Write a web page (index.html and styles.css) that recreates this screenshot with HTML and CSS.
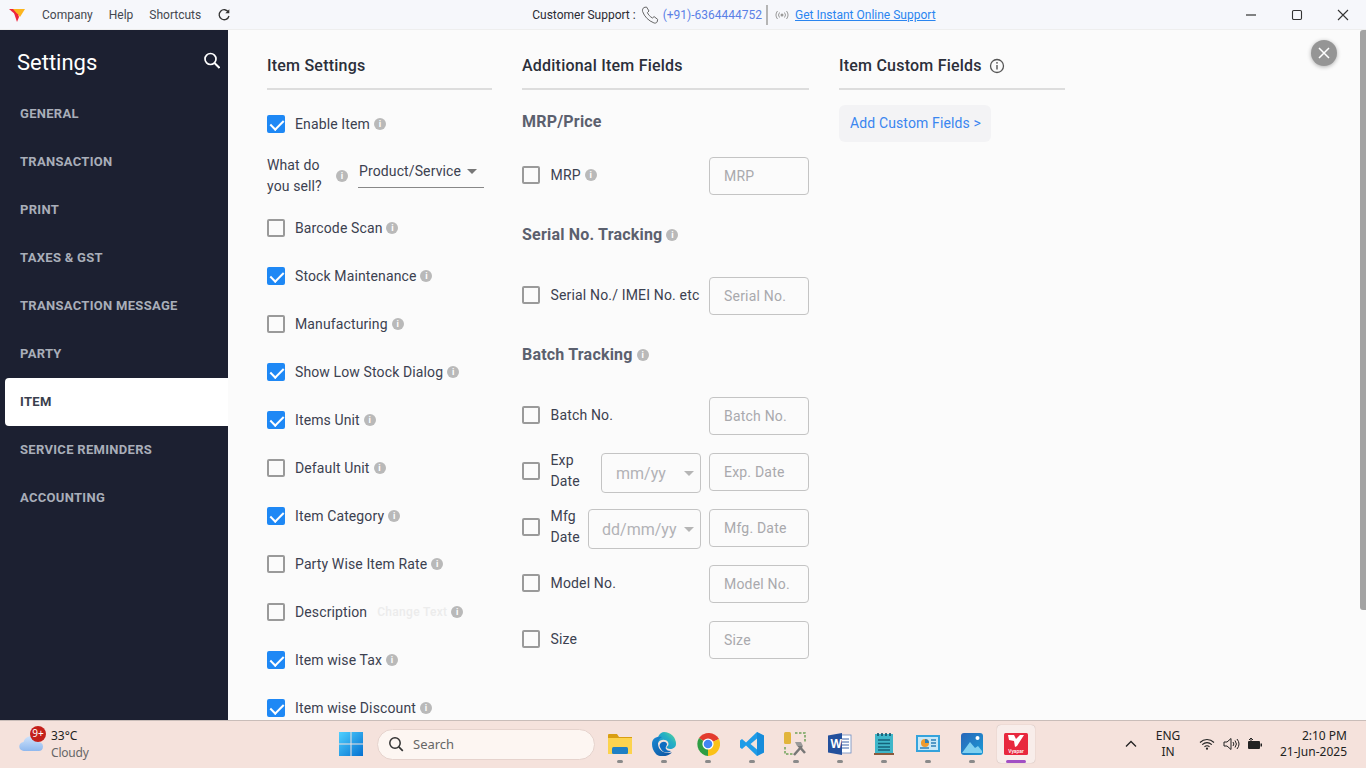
FILE: index.html
```html
<!DOCTYPE html>
<html lang="en">
<head>
<meta charset="utf-8">
<title>Settings</title>
<link rel="stylesheet" href="styles.css">
</head>
<body>
<div class="app">
  <header class="titlebar">
    <svg class="logo" viewBox="0 0 16 14" width="16" height="14"><path d="M0 1h6l3 5-2 1z" fill="#f0243c"/><path d="M4 1h12l-5 8z" fill="#fcb51e"/><path d="M5 5l4 1 1 3-2 5z" fill="#f0243c"/></svg>
    <nav class="menu"><span>Company</span><span>Help</span><span>Shortcuts</span>
      <svg class="refresh" viewBox="0 0 14 14" width="14" height="14"><path d="M11.5 4.2A5 5 0 1 0 12 8" fill="none" stroke="#333" stroke-width="1.3"/><path d="M12.3 1.2v4h-4z" fill="#333"/></svg>
    </nav>
    <div class="support">
      <span class="support-label">Customer Support :</span>
      <svg class="phone" viewBox="0 0 18 18" width="18" height="18"><path d="M3 1.5l2.5-.5 2.5 4-1.6 1.6c.8 2 2.6 4 5 5.4l1.7-1.4 3.6 2.8-.6 2.6c-.6 1-2 1.4-3.2.9C7.500 14.800 3.400 10.600 1.600 5.500 1.200 3.800 1.800 2.200 3 1.500z" fill="none" stroke="#666" stroke-width="1"/></svg>
      <span class="support-phone">(+91)-6364444752</span>
      <span class="support-sep"></span>
      <svg class="signal" viewBox="0 0 14 10" width="14" height="10"><circle cx="7" cy="5" r="1.500" fill="#999"/><path d="M4.500 2.500a4 4 0 0 0 0 5M9.500 2.500a4 4 0 0 1 0 5M2.500 1a6.500 6.500 0 0 0 0 8M11.500 1a6.500 6.500 0 0 1 0 8" fill="none" stroke="#999" stroke-width="1"/></svg>
      <a class="support-link">Get Instant Online Support</a>
    </div>
    <div class="winctl">
      <span class="winbtn"><svg viewBox="0 0 12 12" width="12" height="12"><path d="M1 6h10" stroke="#333" stroke-width="1.200"/></svg></span>
      <span class="winbtn"><svg viewBox="0 0 12 12" width="12" height="12"><rect x="1.500" y="1.500" width="9" height="9" rx="1.200" fill="none" stroke="#333" stroke-width="1.100"/></svg></span>
      <span class="winbtn"><svg viewBox="0 0 12 12" width="12" height="12"><path d="M1 1l10 10M11 1L1 11" stroke="#333" stroke-width="1.100"/></svg></span>
    </div>
  </header>

  <main class="main">
    <aside class="sidebar">
      <div class="side-head">
        <span class="side-title">Settings</span>
        <svg class="side-search" viewBox="0 0 18 18" width="18" height="18"><circle cx="8.500" cy="7" r="5.500" fill="none" stroke="#fff" stroke-width="1.700"/><path d="M12.500 11l5 5" stroke="#fff" stroke-width="2"/></svg>
      </div>
      <ul class="side-nav">
        <li>GENERAL</li><li>TRANSACTION</li><li>PRINT</li><li>TAXES &amp; GST</li><li>TRANSACTION MESSAGE</li><li>PARTY</li><li class="active">ITEM</li><li>SERVICE REMINDERS</li><li>ACCOUNTING</li>
      </ul>
    </aside>

    <section class="content">
      <div class="col col-a">
        <h2 class="col-title">Item Settings</h2>
        <div class="rows">
          <label class="row"><i class="cb on"></i><span>Enable Item</span><b class="info">i</b></label>
          <div class="sell">
            <span class="sell-label">What do you sell?</span><b class="info">i</b>
            <div class="sell-select"><span>Product/Service</span><i class="caret dark"></i></div>
          </div>
          <label class="row"><i class="cb"></i><span>Barcode Scan</span><b class="info">i</b></label>
          <label class="row"><i class="cb on"></i><span>Stock Maintenance</span><b class="info">i</b></label>
          <label class="row"><i class="cb"></i><span>Manufacturing</span><b class="info">i</b></label>
          <label class="row"><i class="cb on"></i><span>Show Low Stock Dialog</span><b class="info">i</b></label>
          <label class="row"><i class="cb on"></i><span>Items Unit</span><b class="info">i</b></label>
          <label class="row"><i class="cb"></i><span>Default Unit</span><b class="info">i</b></label>
          <label class="row"><i class="cb on"></i><span>Item Category</span><b class="info">i</b></label>
          <label class="row"><i class="cb"></i><span>Party Wise Item Rate</span><b class="info">i</b></label>
          <label class="row"><i class="cb"></i><span>Description</span><em class="change">Change Text</em><b class="info">i</b></label>
          <label class="row"><i class="cb on"></i><span>Item wise Tax</span><b class="info">i</b></label>
          <label class="row"><i class="cb on"></i><span>Item wise Discount</span><b class="info">i</b></label>
        </div>
      </div>

      <div class="col col-b">
        <h2 class="col-title">Additional Item Fields</h2>
        <h3 class="sub sub-first">MRP/Price</h3>
        <div class="frow"><i class="cb"></i><span class="flabel">MRP</span><b class="info">i</b><span class="field">MRP</span></div>
        <h3 class="sub">Serial No. Tracking<b class="info">i</b></h3>
        <div class="frow"><i class="cb"></i><span class="flabel">Serial No./ IMEI No. etc</span><span class="field">Serial No.</span></div>
        <h3 class="sub">Batch Tracking<b class="info">i</b></h3>
        <div class="stack">
          <div class="frow"><i class="cb"></i><span class="flabel">Batch No.</span><span class="field">Batch No.</span></div>
          <div class="frow"><i class="cb"></i><span class="flabel narrow">Exp Date</span><span class="pick pick-exp">mm/yy<i class="caret"></i></span><span class="field">Exp. Date</span></div>
          <div class="frow"><i class="cb"></i><span class="flabel narrow">Mfg Date</span><span class="pick pick-mfg">dd/mm/yy<i class="caret"></i></span><span class="field">Mfg. Date</span></div>
          <div class="frow"><i class="cb"></i><span class="flabel">Model No.</span><span class="field">Model No.</span></div>
          <div class="frow"><i class="cb"></i><span class="flabel">Size</span><span class="field">Size</span></div>
        </div>
      </div>

      <div class="col col-c">
        <h2 class="col-title">Item Custom Fields
          <svg viewBox="0 0 16 16" width="16" height="16"><circle cx="8" cy="8" r="6.500" fill="none" stroke="#555" stroke-width="1.300"/><path d="M8 7v4.500" stroke="#555" stroke-width="1.400"/><circle cx="8" cy="4.800" r=".9" fill="#555"/></svg>
        </h2>
        <a class="add-custom">Add Custom Fields &gt;</a>
      </div>

      <button class="close-fab" aria-label="Close"><svg viewBox="0 0 12 12" width="12" height="12"><path d="M1 1l10 10M11 1L1 11" stroke="#fff" stroke-width="1.500"/></svg></button>
      <div class="scrollthumb"></div>
    </section>
  </main>

  <footer class="taskbar">
    <div class="weather">
      <svg class="cloud" viewBox="0 0 26 18" width="26" height="18"><defs><linearGradient id="cl" x1="0" y1="0" x2="0" y2="1"><stop offset="0" stop-color="#cfe3fb"/><stop offset="1" stop-color="#8fb8ee"/></linearGradient></defs><path d="M5 17a4.500 4.500 0 0 1-.5-9C6 3 11 1 15 3c4 2 4 4 4 5 3 0 5 1.500 5 4.500 0 3-2 4.500-4 4.500z" fill="url(#cl)"/></svg>
      <span class="badge">9+</span>
      <div class="wtext"><span class="temp">33°C</span><span class="cond">Cloudy</span></div>
    </div>
    <div class="dock">
      <span class="tile">
        <svg viewBox="0 0 24 24" width="24" height="24"><defs><linearGradient id="wn" x1="0" y1="0" x2="1" y2="1"><stop offset="0" stop-color="#4fd0ff"/><stop offset="1" stop-color="#0570d0"/></linearGradient></defs><path d="M0 0h11.500v11.500H0zM12.500 0H24v11.500H12.500zM0 12.500h11.500V24H0zM12.500 12.500H24V24H12.500z" fill="url(#wn)"/></svg>
      </span>
      <div class="search">
        <svg viewBox="0 0 16 16" width="16" height="16"><circle cx="7" cy="7" r="5.200" fill="none" stroke="#333" stroke-width="1.500"/><path d="M10.800 10.800l4 4" stroke="#333" stroke-width="1.700"/></svg>
        <span>Search</span>
      </div>
      <span class="tile app-tile">
        <svg viewBox="0 0 24 24" width="24" height="24"><path d="M0 3a1 1 0 0 1 1-1h8l2 3h13v17H0z" fill="#d99e12"/><path d="M0 6h24v16H0z" fill="#fcd34e"/><rect x="4" y="15" width="16" height="7" rx="1.500" fill="#1f7fc4"/></svg>
      </span>
      <span class="tile app-tile">
        <svg viewBox="0 0 24 24" width="24" height="24"><defs><linearGradient id="ed" x1="0" y1="1" x2="1" y2="0"><stop offset="0" stop-color="#1a8ad4"/><stop offset=".6" stop-color="#25b0c4"/><stop offset="1" stop-color="#66de90"/></linearGradient><linearGradient id="ed2" x1="0" y1="0" x2="1" y2="1"><stop offset="0" stop-color="#1a8ad4"/><stop offset="1" stop-color="#0c4f9c"/></linearGradient></defs><path d="M12 0a12 12 0 0 1 12 12c0 3.500-3 5-6 5-2 0-3.500-1-3.500-2 2-1 2.500-3 1.500-5-2-3-8-3-10 1C4.500 5 8 0 12 0z" fill="url(#ed)"/><path d="M0 12C0 6 5 4 10 5 6 7 5 12 7 16c2 4 8 6 13 4.500-5 5-13 4.500-16 1.500C1 19 0 15 0 12z" fill="url(#ed2)"/><path d="M8 12c2-3 6-3 7 0 0 2-2 3-1 5 1 1 2 2 5 2-4 3-9 1-10-2-1-2-2-3-1-5z" fill="#0e6cc0"/></svg>
      </span>
      <span class="tile app-tile">
        <svg viewBox="0 0 24 24" width="24" height="24"><path d="M12 12L3 6a12 12 0 0 1 20 1z" fill="#e33b2e"/><path d="M12 12L23 7a12 12 0 0 1-11 17z" fill="#fbc116"/><path d="M12 12v12A12 12 0 0 1 3 6z" fill="#2f9e44"/><circle cx="12" cy="12" r="5.600" fill="#fff"/><circle cx="12" cy="12" r="4.300" fill="#4285f4"/></svg>
      </span>
      <span class="tile app-tile">
        <svg viewBox="0 0 24 24" width="24" height="24"><path d="M17 0l7 3.500v17L17 24 6 13.500 2 17l-2-1.500v-7L2 7l4 3.500z" fill="#1f9ce8"/><path d="M17 6.500L10.500 12l6.500 5.500z" fill="#f3e1da"/><path d="M17 0v24l7-3.500v-17z" fill="#0f7fcf" opacity=".55"/></svg>
      </span>
      <span class="tile app-tile">
        <svg viewBox="0 0 24 24" width="24" height="24"><rect x="0" y="0" width="7" height="12" rx="1.500" fill="#e2b53c"/><path d="M11 1h10v9M1 15v7h9" fill="none" stroke="#6fa35a" stroke-width="1.500" stroke-dasharray="2.500 1.500"/><path d="M10 23l8-9M14 13l7 8" stroke="#777" stroke-width="2.500"/><path d="M11 10h6l2 4h-6z" fill="#999"/></svg>
      </span>
      <span class="tile app-tile">
        <svg viewBox="0 0 24 24" width="24" height="24"><rect x="10" y="3" width="13" height="18" fill="#fff" stroke="#6d8cc0" stroke-width=".8"/><path d="M14 7h7M14 10h7M14 13h7M14 16h7" stroke="#3a63a8"/><path d="M0 3.500L14 1v22L0 20.500z" fill="#23509c"/><text x="2.500" y="16" class="word-w">W</text></svg>
      </span>
      <span class="tile app-tile">
        <svg viewBox="0 0 24 24" width="24" height="24"><rect x="3" y="2" width="18" height="20" fill="#3fb6c9"/><path d="M6 1v3M10 1v3M14 1v3M18 1v3" stroke="#14526a" stroke-width="1.600"/><path d="M6 8h12M6 11.500h12M6 15h12M6 18h12" stroke="#14627a" stroke-width="1.500"/><rect x="2" y="21" width="20" height="2" fill="#8a5a3c"/></svg>
      </span>
      <span class="tile app-tile">
        <svg viewBox="0 0 24 24" width="24" height="24"><rect x="0" y="3" width="24" height="17" fill="#35a3dc"/><rect x="2" y="5" width="20" height="13" fill="#c9e8f7"/><circle cx="9" cy="11" r="4" fill="#ef9a2d"/><path d="M9 11V7a4 4 0 0 1 4 4z" fill="#2d7fb8"/><path d="M15 8h5M15 11h5M15 14h5M4 16h9" stroke="#2d7fb8" stroke-width="1.300"/></svg>
      </span>
      <span class="tile app-tile">
        <svg viewBox="0 0 24 24" width="24" height="24"><defs><linearGradient id="ph" x1="0" y1="0" x2="1" y2="1"><stop offset="0" stop-color="#2a66b8"/><stop offset="1" stop-color="#1a9ad6"/></linearGradient></defs><rect x="1" y="1" width="22" height="22" rx="3" fill="url(#ph)"/><circle cx="17.500" cy="6" r="2" fill="#fff"/><path d="M2 21l8-11 5 6 3-2 4 5v2H3z" fill="#7fd0f0"/></svg>
      </span>
      <span class="tile app-tile current">
        <svg viewBox="0 0 24 24" width="24" height="24"><rect width="24" height="22" y="1" rx="1.500" fill="#e8283e"/><path d="M4 3h6l2 4 4-4h4l-7 11-2 1-1-6-5-1z" fill="#fff"/><text x="12" y="21" class="vy">Vyapar</text></svg>
      </span>
    </div>
    <div class="tray">
      <svg class="chev" viewBox="0 0 12 8" width="12" height="8"><path d="M1 6.500l5-5 5 5" fill="none" stroke="#222" stroke-width="1.300"/></svg>
      <div class="lang"><span>ENG</span><span>IN</span></div>
      <svg class="wifi" viewBox="0 0 16 12" width="16" height="12"><path d="M1 4.500c4-4 10-4 14 0M3.200 6.700c3-2.600 6.600-2.600 9.600 0M5.500 8.800c1.500-1.200 3.500-1.200 5 0" fill="none" stroke="#222" stroke-width="1.100"/><circle cx="8" cy="10.700" r="1.100" fill="#222"/></svg>
      <svg class="speaker" viewBox="0 0 17 14" width="17" height="14"><path d="M1 5h3l4-3.500v11L4 9H1z" fill="none" stroke="#222"/><path d="M10 5a3 3 0 0 1 0 4M12 3.500a5.500 5.500 0 0 1 0 7M14 2a8 8 0 0 1 0 10" fill="none" stroke="#222"/></svg>
      <svg class="batt" viewBox="0 0 16 12" width="16" height="12"><rect x="1" y="3" width="12" height="8" rx="1" fill="#222"/><rect x="13.500" y="5.500" width="1.500" height="3" fill="#222"/><path d="M4 0v4M2 2l2-2 2 2" stroke="#222" fill="none"/></svg>
      <div class="clock"><span>2:10 PM</span><span>21-Jun-2025</span></div>
    </div>
  </footer>
</div>
</body>
</html>
```
FILE: styles.css
```css
* { box-sizing: border-box; }
html, body { margin: 0; height: 100%; overflow: hidden; }
body { font-family: Roboto, "Liberation Sans", sans-serif; font-size: 14px; color: #3c4150; letter-spacing: .12px; }
h2, h3, ul { margin: 0; padding: 0; }
ul { list-style: none; }
i, em { font-style: normal; }
.app { width: 1366px; height: 768px; display: flex; flex-direction: column; }

/* title bar */
.titlebar { height: 30px; flex: none; background: #f6f7fb; border-bottom: 1px solid #eeeeee; display: flex; align-items: center; position: relative; font-size: 12px; color: #333; letter-spacing: 0; }
.logo { margin-left: 9px; flex: none; }
.menu { display: flex; align-items: center; gap: 16px; margin-left: 17px; color: #44474f; }
.support { display: flex; align-items: center; margin-left: 301px; }
.support-label { color: #2b2b33; }
.phone { margin-left: 5px; }
.support-phone { margin-left: 4px; color: #5a80e6; }
.support-sep { width: 2px; height: 20px; background: #b5b5b5; margin: 0 7px 0 4px; }
.signal { margin-right: 6px; }
.support-link { color: #2a85f0; text-decoration: underline; }
.winctl { margin-left: auto; display: flex; }
.winbtn { width: 46px; height: 29px; display: flex; align-items: center; justify-content: center; }

/* main */
.main { flex: 1; min-height: 0; display: flex; }
.sidebar { width: 228px; flex: none; background: #1c2031; color: #fff; }
.side-head { height: 60px; display: flex; align-items: center; justify-content: space-between; padding: 4px 8px 0 17px; }
.side-title { font-size: 22px; color: #fff; letter-spacing: 0; }
.side-search { margin-top: -2px; }
.side-nav li { height: 48px; margin-left: 5px; padding: 0 0 2px 15px; display: flex; align-items: center; font-size: 13px; font-weight: 700; color: #a9aeb9; letter-spacing: .3px; }
.side-nav li.active { background: #fff; color: #3a3f4d; border-radius: 4px 0 0 4px; }

.content { flex: 1; min-width: 0; position: relative; background: #fbfbfb; display: flex; padding: 0 0 0 39px; overflow: hidden; }
.col { flex: none; }
.col-a { width: 225px; margin-right: 30px; }
.col-b { width: 287px; margin-right: 30px; }
.col-c { width: 226px; }
.col-title { height: 60px; padding-top: 25px; border-bottom: 2px solid #dddddd; font-size: 16px; font-weight: 500; line-height: 21px; color: #2b2f3a; display: flex; align-items: flex-start; gap: 7px; letter-spacing: .22px; }
.col-title svg { margin-top: 3px; }
.rows { padding-top: 10px; }

.row { height: 48px; display: flex; align-items: center; }
.cb { width: 18px; height: 18px; flex: none; border: 2px solid #9a9a9a; border-radius: 2px; margin-right: 10px; background: transparent; position: relative; }
.cb.on { background: #1e88f5; border-color: #1e88f5; }
.cb.on::after { content: ""; position: absolute; left: 4px; top: 0; width: 6px; height: 11px; border: solid #fff; border-width: 0 2px 2px 0; transform: rotate(45deg); }
.info { width: 12px; height: 12px; flex: none; margin-left: 4px; border-radius: 50%; background: #b9b9b9; color: #fff; font: 700 9px/12px Roboto, sans-serif; letter-spacing: 0; text-align: center; display: inline-block; }
.change { margin-left: 10px; font-size: 12px; font-weight: 500; color: #ececec; letter-spacing: .3px; }

.sell { height: 56px; display: flex; align-items: center; }
.sell-label { width: 65px; line-height: 21px; color: #3c4150; }
.sell-select { width: 126px; height: 33px; margin: 7px 0 0 10px; align-self: flex-start; border-bottom: 1px solid #888; display: flex; align-items: center; justify-content: space-between; padding: 0 7px 0 1px; }
.caret { width: 0; height: 0; border: 5px solid transparent; border-top-color: #b5b5b5; border-bottom: 0; display: inline-block; flex: none; }
.caret.dark { border-top-color: #777; }

.sub { font-size: 16px; font-weight: 700; line-height: 20px; color: #5b606e; display: flex; align-items: center; margin: 30px 0 32px; height: 20px; letter-spacing: .2px; }
.sub-first { margin: 22px 0 25px; }
.frow { height: 38px; display: flex; align-items: center; }
.frow .cb, .frow .flabel, .frow > .info { margin-bottom: 2px; }
.stack { display: flex; flex-direction: column; gap: 18px; }
.flabel { color: #3c4150; letter-spacing: .16px; padding-left: .5px; }
.flabel.narrow { width: 30px; line-height: 21px; margin-bottom: 3px; }
.field { margin-left: auto; width: 100px; height: 38px; border: 1px solid #c4c4c4; border-radius: 4px; padding: 0 14px; display: flex; align-items: center; color: #a9a9ad; letter-spacing: .2px; flex: none; }
.frow .pick + .field { margin-left: 8px; }
.pick { margin-left: auto; height: 40px; margin-top: 2px; border: 1px solid #c4c4c4; border-radius: 4px; display: flex; align-items: center; justify-content: space-between; font-size: 16px; color: #b2b2b6; flex: none; padding: 0 6px 0 14px; letter-spacing: 0; }
.pick-exp { width: 100px; }
.pick-mfg { width: 113px; padding-left: 13px; }

.add-custom { display: inline-block; margin-top: 15px; height: 37px; padding: 0 10px 0 11px; background: #f3f3f5; border-radius: 6px; color: #3a86f0; line-height: 37px; letter-spacing: .13px; }

.close-fab { position: absolute; left: 1083px; top: 10px; width: 26px; height: 26px; padding: 0; border: 0; border-radius: 50%; background: #959595; box-shadow: 0 1px 4px rgba(0,0,0,.3); display: flex; align-items: center; justify-content: center; }
.scrollthumb { position: absolute; right: 0; top: 0; width: 6px; height: 580px; background: #a3a3a3; border-radius: 3px 0 0 3px; }

/* taskbar */
.taskbar { height: 48px; flex: none; background: #f5e2dc; border-top: 1px solid #c9bdb9; display: grid; grid-template-columns: 329px auto 1fr; align-items: start; color: #222; font-family: "Noto Sans", "Open Sans", sans-serif; font-size: 12px; letter-spacing: 0; }
.weather { position: relative; display: flex; align-items: center; padding-left: 19px; height: 46px; }
.cloud { margin-top: -2px; flex: none; }
.badge { position: absolute; left: 30px; top: 5px; width: 16px; height: 16px; border-radius: 50%; background: #c4201b; color: #fff; font-size: 10px; line-height: 15px; text-align: center; }
.wtext { display: flex; flex-direction: column; margin-left: 6px; line-height: 17px; }
.temp { font-size: 12px; color: #222; }
.cond { color: #666; letter-spacing: -.2px; }
.dock { display: flex; align-items: center; height: 46px; }
.tile { width: 44px; height: 38px; display: flex; align-items: center; justify-content: center; position: relative; flex: none; border-radius: 4px; }
.app-tile::after { content: ""; position: absolute; left: 19px; bottom: 0; width: 6px; height: 3px; border-radius: 2px; background: #8a8a8a; }
.tile.current { width: 38px; margin: 0 3px; background: #f8edea; box-shadow: 0 0 1px rgba(0,0,0,.3); }
.tile.current::after { left: 9px; width: 20px; background: #a24fc4; }
.search { width: 218px; height: 31px; margin: 0 3px 0 4px; background: #fdf6f2; border: 1px solid #e6d3cd; border-radius: 16px; display: flex; align-items: center; gap: 9px; padding-left: 10px; color: #666; font-size: 13px; }
.word-w { font: 700 12px "Liberation Sans", sans-serif; fill: #fff; }
.vy { font: 500 5px Roboto, sans-serif; fill: #fff; text-anchor: middle; }
.tray { display: flex; align-items: center; height: 46px; }
.chev { margin-left: 87px; flex: none; }
.lang { width: 40px; margin-left: 11px; display: flex; flex-direction: column; align-items: center; line-height: 16px; }
.wifi { margin-left: 11px; }
.speaker { margin-left: 8px; }
.batt { margin-left: 7px; }
.clock { margin-left: 16px; display: flex; flex-direction: column; align-items: flex-end; line-height: 16px; width: 68px; }
```
